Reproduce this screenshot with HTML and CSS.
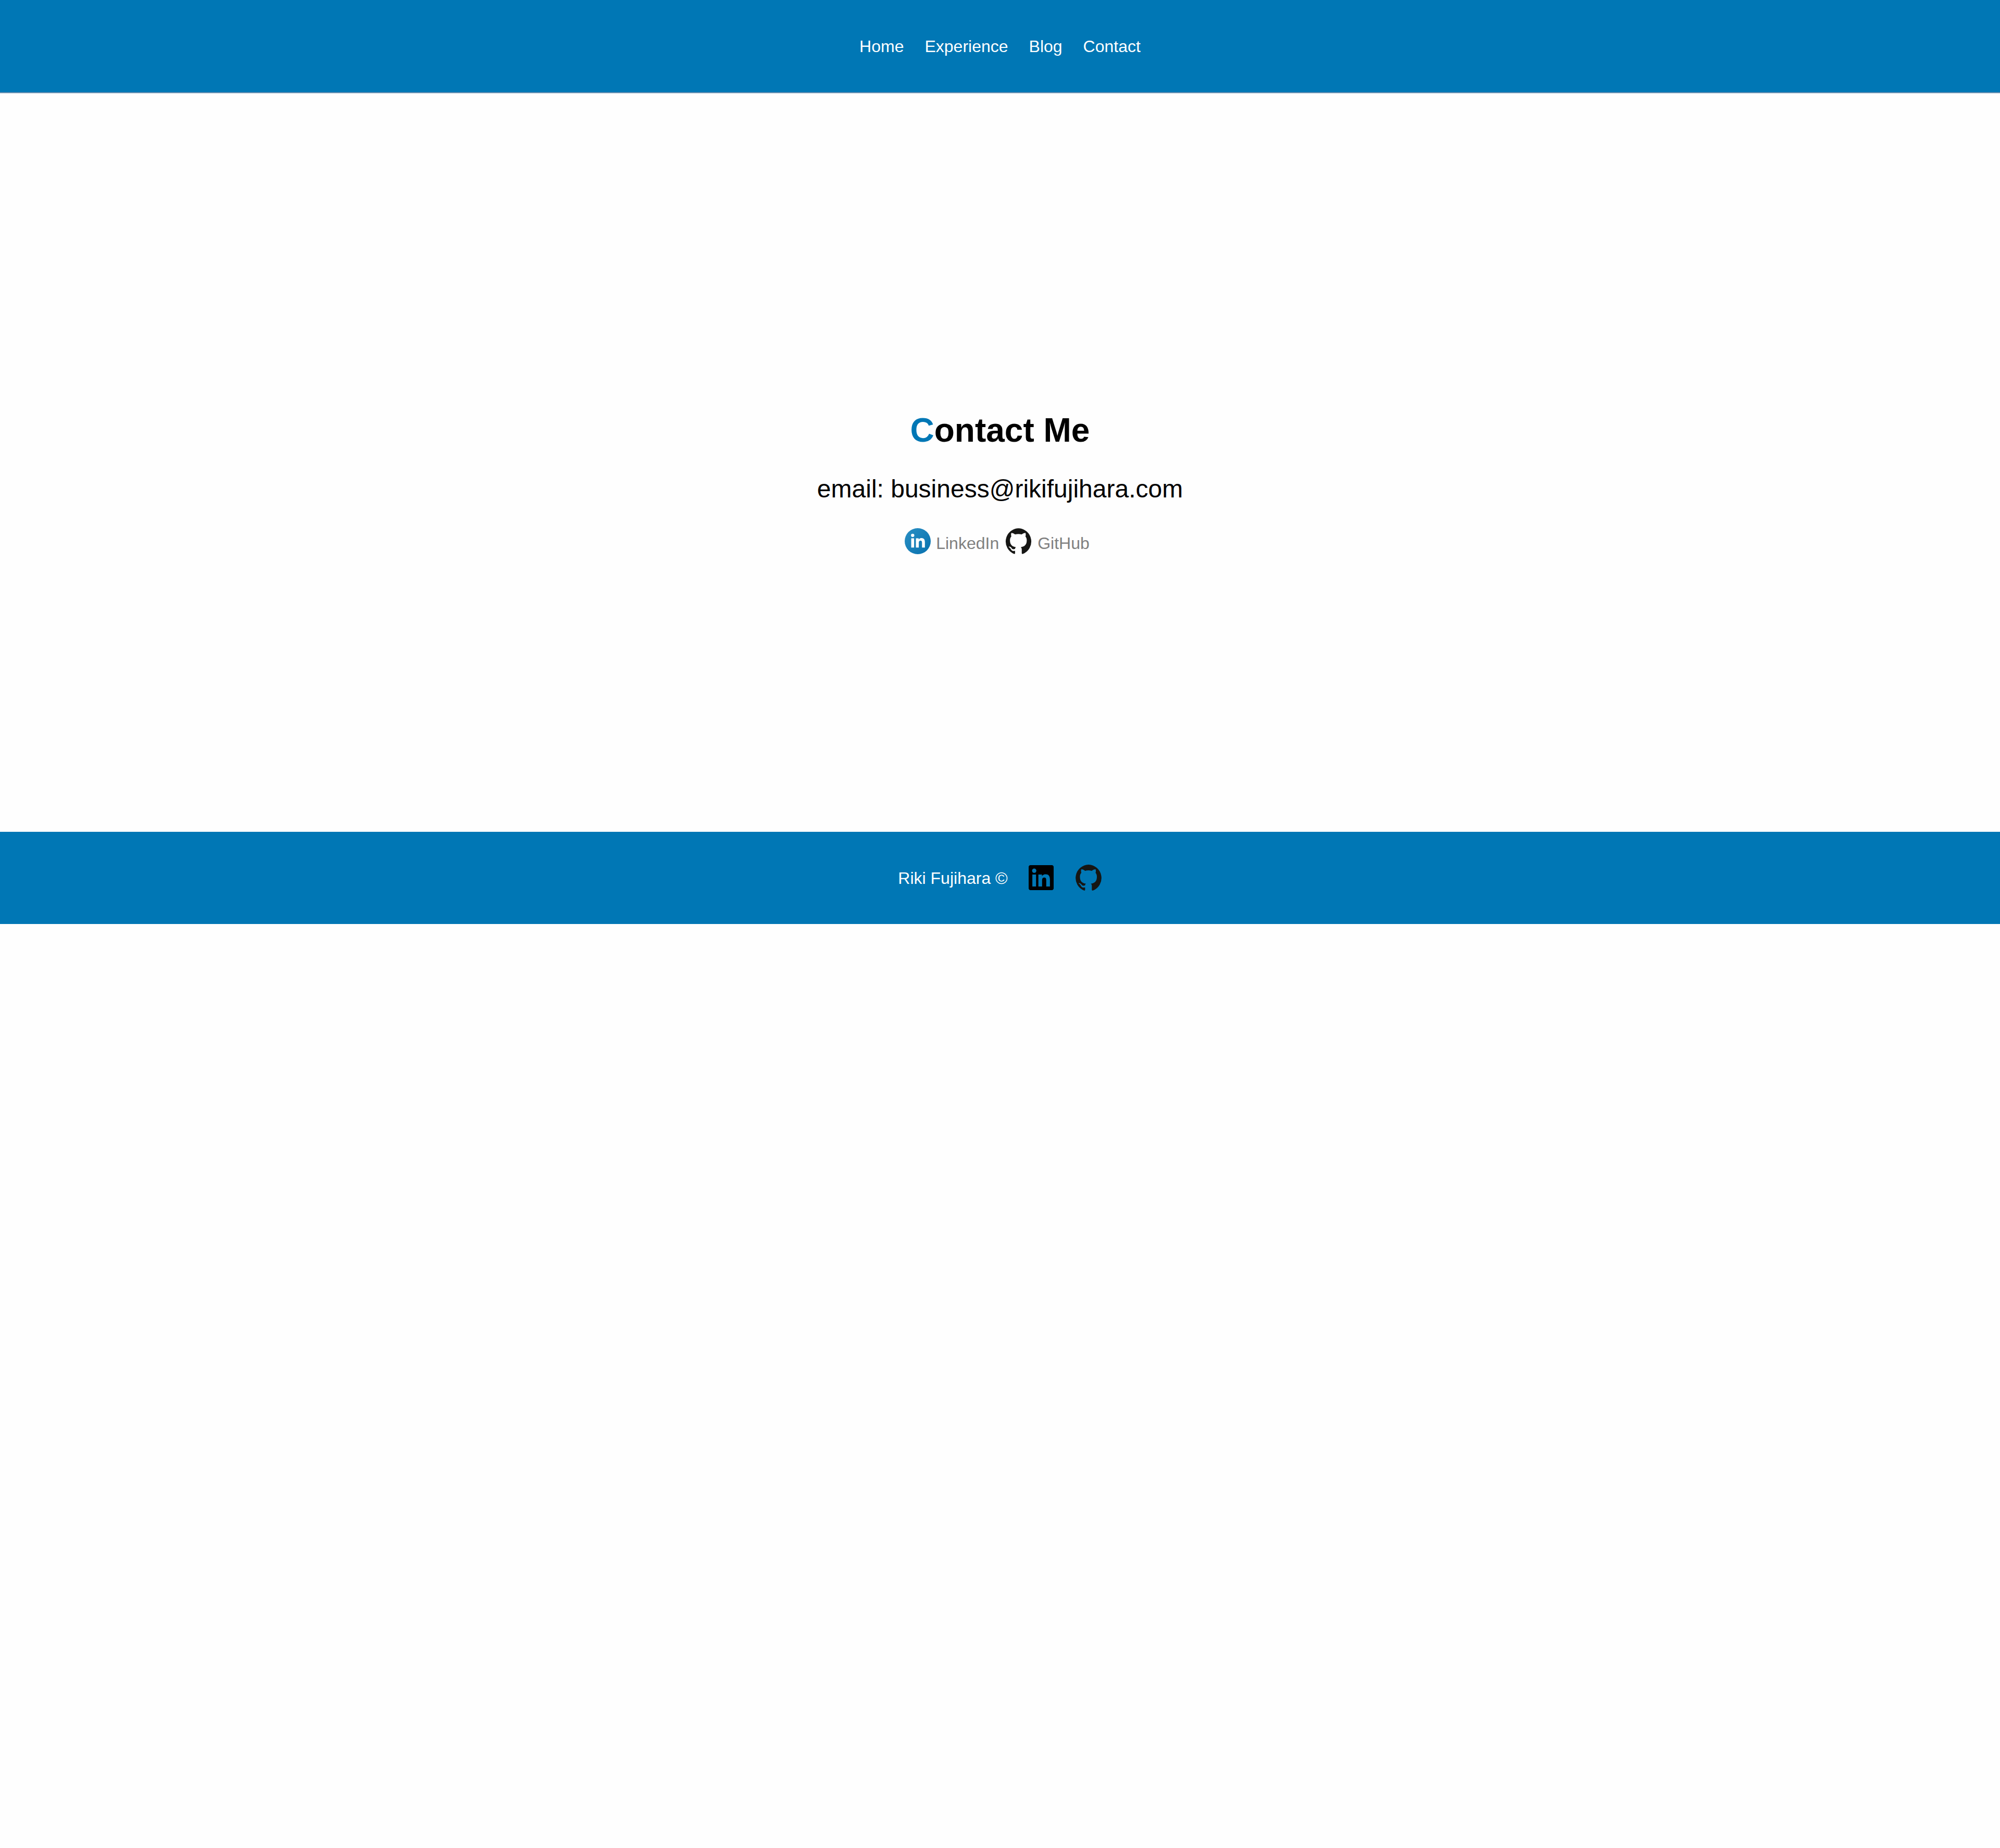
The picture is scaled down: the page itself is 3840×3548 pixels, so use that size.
FILE: index.html
```
<!DOCTYPE html>
<html lang="en">
<head>
<meta charset="utf-8">
<title>Contact Me</title>
<link rel="stylesheet" href="styles.css">
</head>
<body>
<svg class="defs" aria-hidden="true">
  <symbol id="github" viewBox="0 0 52 50.5"><path d="M26 0A26 26 0 0 0 17.500 50.200Q19.300 50.500 19.300 49V44.200C14.500 45 12.800 44 11.300 41.300 10 38.700 8.700 37.800 6.900 36.600 6.300 36 7.600 35.700 9 36 11.500 36.600 12.300 39 13.600 40.200 15.300 41.400 17.500 41 19.300 40.200 19.500 38.700 20 37.600 21 36.900 14.500 36.200 9.300 33 9.300 23.500 9.300 20.500 10.200 18 12 16 11.500 14.300 11 12 12 9.200 14.300 9 17 10.200 19.300 12 23.500 10.900 28 10.900 32.200 12 34.600 10.200 37.300 9 39.700 9.200 40.600 12 40.200 14.300 39.600 16 41.300 18 42.200 20.500 42.200 23.500 42.200 33 37 36.200 30.500 36.900 31.800 38 32.400 39.500 32.400 41.500V49Q32.400 50.500 34.500 50.200A26 26 0 0 0 26 0Z"/></symbol>
</svg>
<header class="bar bar-top">
  <nav class="nav">
    <a>Home</a><a>Experience</a><a>Blog</a><a>Contact</a>
  </nav>
</header>
<main class="contact">
  <h1 class="title"><span class="accent">C</span>ontact Me</h1>
  <p class="email">email: business@rikifujihara.com</p>
  <div class="links">
    <svg class="icon-circle" viewBox="0 0 50 50">
      <defs><linearGradient id="sky" x1="0" y1="0" x2="1" y2="1"><stop offset="0" stop-color="#2b90c4"/><stop offset="1" stop-color="#0670ae"/></linearGradient></defs>
      <circle cx="25" cy="25" r="25" fill="url(#sky)"/>
      <path fill="#fff" transform="translate(7 5.500) scale(1.555)" d="M20.447 20.452h-3.554v-5.569c0-1.328-.027-3.037-1.852-3.037-1.853 0-2.136 1.445-2.136 2.939v5.667H9.351V9h3.414v1.561h.046c.477-.9 1.637-1.85 3.37-1.85 3.601 0 4.267 2.37 4.267 5.455v6.286zM5.337 7.433a2.062 2.062 0 0 1-2.063-2.065 2.064 2.064 0 1 1 2.063 2.065zm1.782 13.019H3.555V9h3.564v11.452z"/>
    </svg>
    <a class="link">LinkedIn</a>
    <svg class="icon-github"><use href="#github"/></svg>
    <a class="link">GitHub</a>
  </div>
</main>
<footer class="bar bar-bottom">
  <span class="copyright">Riki Fujihara ©</span>
  <svg class="icon-square" viewBox="0 0 24 24"><path d="M20.447 20.452h-3.554v-5.569c0-1.328-.027-3.037-1.852-3.037-1.853 0-2.136 1.445-2.136 2.939v5.667H9.351V9h3.414v1.561h.046c.477-.9 1.637-1.85 3.37-1.85 3.601 0 4.267 2.37 4.267 5.455v6.286zM5.337 7.433a2.062 2.062 0 0 1-2.063-2.065 2.064 2.064 0 1 1 2.063 2.065zm1.782 13.019H3.555V9h3.564v11.452zM22.225 0H1.771C.792 0 0 .774 0 1.729v20.542C0 23.227.792 24 1.771 24h20.451C23.2 24 24 23.227 24 22.271V1.729C24 .774 23.2 0 22.222 0h.003z"/></svg>
  <svg class="icon-github"><use href="#github"/></svg>
</footer>
</body>
</html>
```
FILE: styles.css
```
* { box-sizing: border-box; }
body {
  margin: 0;
  min-height: 3548px;
  background: #fefefe;
  color: #000;
  font: 32px/36px "Liberation Sans", Arial, Helvetica, sans-serif;
}
.defs { display: none; }
.bar {
  display: flex;
  align-items: center;
  justify-content: center;
  background: #0077b5;
  color: #fff;
}
.bar-top { height: 179px; padding-top: 1px; border-bottom: 2px solid #6f93b3; }
.bar-bottom { height: 177px; padding-bottom: 1px; }
.copyright { margin-top: 2px; }
.nav { display: flex; gap: 40px; }
.contact {
  height: 1418px;
  padding-top: 610px;
  display: flex;
  flex-direction: column;
  align-items: center;
}
.title { margin: 0; font-size: 64px; line-height: 74px; font-weight: 700; }
.accent { color: #0077b5; }
.email { margin: 48px 0 0; font-size: 48px; line-height: 56px; }
.links { display: flex; height: 50px; margin-top: 47px; padding-right: 11px; }
.link { color: #808080; margin-top: 11px; }
.icon-circle { width: 50px; height: 50px; margin-right: 10px; }
.icon-github { width: 51px; height: 50px; fill: #161614; }
.links .icon-github { margin: 0 11px 0 12px; }
.icon-square { width: 48px; height: 48px; margin: 0 41px 0 40px; }
.bar .icon-github { width: 52px; }
```
